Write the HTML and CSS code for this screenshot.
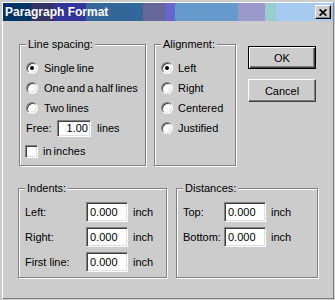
FILE: index.html
```html
<!DOCTYPE html>
<html lang="en">
<head>
    <meta charset="UTF-8">
    <meta name="viewport" content="width=device-width, initial-scale=1.0">
    <title>Paragraph Format</title>
    <link rel="stylesheet" href="styles.css">
</head>
<body>
    <div class="window">
        <div class="titlebar">
            <span class="title">Paragraph Format</span>
            <button class="close" type="button" aria-label="Close">
                <svg width="8" height="7" viewBox="0 0 8 7">
                    <path d="M0.6 0.4L7.4 6.6M7.4 0.4L0.6 6.6" stroke="#000" stroke-width="1.7" fill="none"/>
                </svg>
            </button>
        </div>
        <div class="content">
            <div class="row row-top">
                <fieldset class="group group-spacing">
                    <legend>Line spacing:</legend>
                    <div class="opt"><span class="radio checked"></span>Single line</div>
                    <div class="opt"><span class="radio"></span>One and a half lines</div>
                    <div class="opt"><span class="radio"></span>Two lines</div>
                    <div class="free">
                        <span class="free-label">Free:</span>
                        <span class="field field-free">1.00</span>
                        <span class="unit">lines</span>
                    </div>
                    <div class="opt opt-check"><span class="check"></span>in inches</div>
                </fieldset>
                <fieldset class="group group-align">
                    <legend>Alignment:</legend>
                    <div class="opt"><span class="radio checked"></span>Left</div>
                    <div class="opt"><span class="radio"></span>Right</div>
                    <div class="opt"><span class="radio"></span>Centered</div>
                    <div class="opt"><span class="radio"></span>Justified</div>
                </fieldset>
                <div class="buttons">
                    <button class="btn btn-default" type="button">OK</button>
                    <button class="btn" type="button">Cancel</button>
                </div>
            </div>
            <div class="row row-bottom">
                <fieldset class="group group-indents">
                    <legend>Indents:</legend>
                    <div class="field-row"><span class="field-label">Left:</span><span class="field">0.000</span><span class="unit">inch</span></div>
                    <div class="field-row"><span class="field-label">Right:</span><span class="field">0.000</span><span class="unit">inch</span></div>
                    <div class="field-row"><span class="field-label">First line:</span><span class="field">0.000</span><span class="unit">inch</span></div>
                </fieldset>
                <fieldset class="group group-distances">
                    <legend>Distances:</legend>
                    <div class="field-row"><span class="field-label">Top:</span><span class="field">0.000</span><span class="unit">inch</span></div>
                    <div class="field-row"><span class="field-label">Bottom:</span><span class="field">0.000</span><span class="unit">inch</span></div>
                </fieldset>
            </div>
        </div>
    </div>
</body>
</html>
```

FILE: styles.css
```css
:root {
    --face: #cccccc;
    --shadow: #808080;
    --dark: #404040;
    --light: #dfdfdf;
}

html, body {
    margin: 0;
    padding: 0;
    background-color: var(--face);
}

body {
    font-family: "Liberation Sans", Arial, sans-serif;
    font-size: 11px;
    color: #000;
    white-space: nowrap;
}

.window {
    margin: 2px 1px 1px 2px;
    width: 332px;
    height: 297px;
    box-sizing: border-box;
    border: 1px solid;
    border-color: #fff var(--shadow) var(--shadow) #fff;
    background-color: var(--face);
}

/* Title bar */
.titlebar {
    height: 18px;
    display: flex;
    align-items: center;
    justify-content: space-between;
    padding: 0 2px;
    background: linear-gradient(to right,
        #003366 0 28px,
        #333366 28px 51px,
        #333399 51px 83px,
        #336699 83px 140px,
        #666699 140px 162px,
        #6666cc 162px 172px,
        #6699cc 172px 235px,
        #9999cc 235px 262px,
        #99cccc 262px 273px,
        #a6caf0 273px);
}

.title {
    color: #fff;
    font-weight: bold;
    font-size: 12px;
}

.close {
    width: 16px;
    height: 14px;
    padding: 0;
    box-sizing: border-box;
    display: flex;
    align-items: center;
    justify-content: center;
    background-color: var(--face);
    border: 1px solid;
    border-color: #fff #000 #000 #fff;
    box-shadow: inset -1px -1px var(--shadow);
}

/* Dialog body */
.content {
    padding: 17px 15px 0 15px;
}

.row {
    display: flex;
    align-items: flex-start;
}

.row-top {
    gap: 8px;
}

.row-bottom {
    gap: 9px;
    margin-top: 16px;
}

.group {
    margin: 0;
    padding: 7px 6px 0 6px;
    min-width: 0;
    box-sizing: border-box;
    border: 1px solid var(--shadow);
    box-shadow: 1px 1px #fff, inset 1px 1px #fff;
}

.group legend {
    padding: 0 2px;
    line-height: 13px;
    background-color: var(--face);
}

.group-spacing {
    margin-left: 1px;
    width: 127px;
    height: 128px;
}

.group-align {
    width: 82px;
    height: 128px;
}

.group-indents {
    width: 149px;
    height: 96px;
}

.group-distances {
    width: 142px;
    height: 96px;
}

/* Radio and check options */
.opt {
    display: flex;
    align-items: center;
    gap: 6px;
    height: 20px;
    word-spacing: -1px;
}

.group-align .opt {
    gap: 5px;
}

.radio {
    flex: none;
    width: 12px;
    height: 12px;
    box-sizing: border-box;
    border-radius: 50%;
    border: 1px solid;
    border-color: var(--shadow) #fff #fff var(--shadow);
    background-color: #fff;
    box-shadow: inset 1px 1px var(--dark), inset -1px -1px var(--light);
    display: flex;
    align-items: center;
    justify-content: center;
}

.radio.checked::after {
    content: "";
    width: 4px;
    height: 4px;
    border-radius: 50%;
    background-color: #000;
}

.opt-check {
    margin-top: 3px;
    margin-left: -1px;
    gap: 5px;
}

.check {
    flex: none;
    width: 13px;
    height: 13px;
    box-sizing: border-box;
    border: 1px solid;
    border-color: var(--shadow) #fff #fff var(--shadow);
    background-color: #fff;
    box-shadow: inset 1px 1px var(--dark), inset -1px -1px var(--light);
}

/* Text fields */
.free {
    display: flex;
    align-items: center;
    height: 20px;
}

.free-label {
    width: 31px;
}

.field {
    flex: none;
    width: 42px;
    height: 20px;
    box-sizing: border-box;
    padding-left: 3px;
    display: flex;
    align-items: center;
    border: 1px solid;
    border-color: var(--shadow) #fff #fff var(--shadow);
    background-color: #fff;
    box-shadow: inset 1px 1px var(--dark), inset -1px -1px var(--light);
}

.field-free {
    width: 34px;
    height: 17px;
    padding: 0 2px 0 0;
    justify-content: flex-end;
}

.unit {
    margin-left: 6px;
}

.field-row {
    display: flex;
    align-items: center;
    height: 20px;
    margin-bottom: 5px;
}

.field-row .unit {
    margin-left: 5px;
}

.group-indents .field-label {
    width: 61px;
}

.group-distances .field-label {
    width: 41px;
}

/* Buttons */
.buttons {
    display: flex;
    flex-direction: column;
    gap: 10px;
    margin-top: 8px;
    margin-left: 4px;
}

.btn {
    width: 68px;
    height: 23px;
    padding: 0;
    box-sizing: border-box;
    font-family: inherit;
    font-size: 11px;
    color: #000;
    background-color: var(--face);
    border: 1px solid;
    border-color: #fff var(--dark) var(--dark) #fff;
    box-shadow: inset -1px -1px var(--shadow);
}

.btn-default {
    border-color: #000;
    box-shadow: inset 1px 1px #fff, inset -1px -1px var(--dark), inset -2px -2px var(--shadow);
}
```
